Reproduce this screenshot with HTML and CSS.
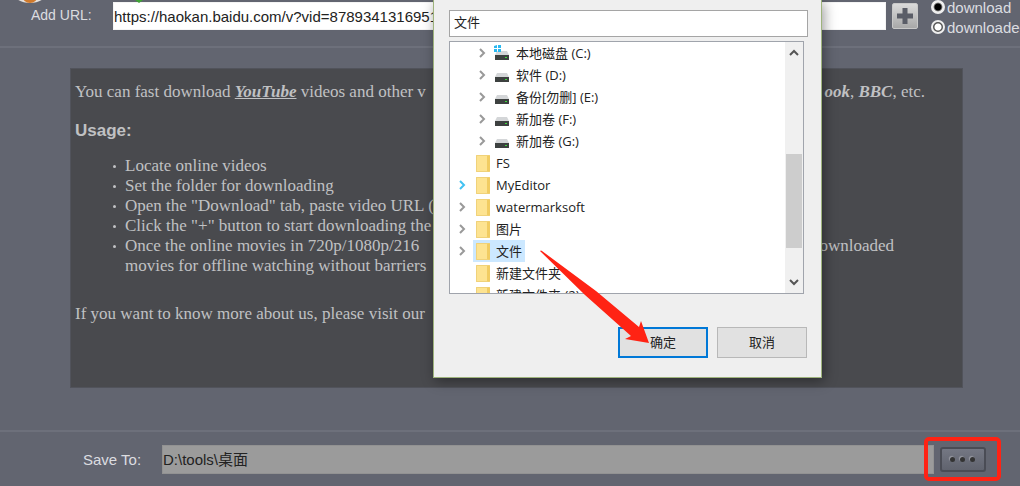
FILE: index.html
```html
<!DOCTYPE html>
<html lang="en">
<head>
<meta charset="utf-8">
<title>Video Downloader</title>
<link rel="stylesheet" href="styles.css">
</head>
<body>
<div class="app">
  <header class="url-bar">
    <svg class="tab-icons" width="160" height="4" viewBox="0 0 160 4" aria-hidden="true">
      <ellipse cx="30" cy="-8" rx="17" ry="11" fill="#e6e2dd"/>
      <ellipse cx="30" cy="-5" rx="8" ry="8" fill="#d07a2c"/>
      <path d="M135 0h8l-4 3z" fill="#3fa535"/>
    </svg>
    <label class="url-label" for="url">Add URL:</label>
    <input class="url-input" id="url" type="text" value="https://haokan.baidu.com/v?vid=8789341316951">
    <button class="add-button" type="button" aria-label="Add">
      <svg width="16" height="16" viewBox="0 0 16 16"><path d="M8 0v16M0 8h16" stroke="#5a5d67" stroke-width="5"/></svg>
    </button>
    <div class="filters">
      <label class="filter"><input class="radio" type="radio" name="filter" checked>download</label>
      <label class="filter"><input class="radio" type="radio" name="filter">downloaded</label>
    </div>
  </header>

  <main class="content">
    <section class="help">
      <p class="split"><span>You can fast download <a class="site" href="#">YouTube</a> videos and other v</span><span class="intro-end"><b>ook</b>, <b>BBC</b>, etc.</span></p>
      <h2 class="usage">Usage:</h2>
      <ul class="steps">
        <li>Locate online videos</li>
        <li>Set the folder for downloading</li>
        <li>Open the "Download" tab, paste video URL (</li>
        <li>Click the "+" button to start downloading the</li>
        <li><span class="split"><span>Once the online movies in 720p/1080p/216</span><span class="step-end">ownloaded</span></span>movies for offline watching without barriers</li>
      </ul>
      <p>If you want to know more about us, please visit our</p>
    </section>
  </main>

  <footer class="save-bar">
    <label class="save-label" for="save">Save To:</label>
    <input class="save-input" id="save" type="text" value="D:\tools\桌面">
    <div class="browse-mark">
      <button class="browse" type="button" aria-label="Browse"><i class="dot"></i><i class="dot"></i><i class="dot"></i></button>
    </div>
  </footer>

  <div class="dialog" role="dialog" aria-label="Folder">
    <input class="folder-input" type="text" value="文件" aria-label="Folder name">
    <div class="tree-box">
      <ul class="tree">
        <li class="row drive-row"><svg class="chevron" viewBox="0 0 8 10"><path d="M2 1l4 4-4 4"/></svg><svg class="drive" viewBox="0 0 16 16"><path d="M3 6h10l2 4H1z" fill="#d4d6d8"/><path d="M1 10h14v5H1z" fill="#3d4140"/><path d="M11 12h2v1h-2z" fill="#3ddc3d"/><path d="M0 1l3-1v3H0zM4 0h3v3H4zM0 4h3v3H0zM4 4h3v3H4z" fill="#29b8f0"/></svg><span class="name">本地磁盘 (C:)</span></li>
        <li class="row drive-row"><svg class="chevron" viewBox="0 0 8 10"><path d="M2 1l4 4-4 4"/></svg><svg class="drive" viewBox="0 0 16 16"><path d="M3 6h10l2 4H1z" fill="#d4d6d8"/><path d="M1 10h14v5H1z" fill="#3d4140"/><path d="M11 12h2v1h-2z" fill="#3ddc3d"/></svg><span class="name">软件 (D:)</span></li>
        <li class="row drive-row"><svg class="chevron" viewBox="0 0 8 10"><path d="M2 1l4 4-4 4"/></svg><svg class="drive" viewBox="0 0 16 16"><path d="M3 6h10l2 4H1z" fill="#d4d6d8"/><path d="M1 10h14v5H1z" fill="#3d4140"/><path d="M11 12h2v1h-2z" fill="#3ddc3d"/></svg><span class="name">备份[勿删] (E:)</span></li>
        <li class="row drive-row"><svg class="chevron" viewBox="0 0 8 10"><path d="M2 1l4 4-4 4"/></svg><svg class="drive" viewBox="0 0 16 16"><path d="M3 6h10l2 4H1z" fill="#d4d6d8"/><path d="M1 10h14v5H1z" fill="#3d4140"/><path d="M11 12h2v1h-2z" fill="#3ddc3d"/></svg><span class="name">新加卷 (F:)</span></li>
        <li class="row drive-row"><svg class="chevron" viewBox="0 0 8 10"><path d="M2 1l4 4-4 4"/></svg><svg class="drive" viewBox="0 0 16 16"><path d="M3 6h10l2 4H1z" fill="#d4d6d8"/><path d="M1 10h14v5H1z" fill="#3d4140"/><path d="M11 12h2v1h-2z" fill="#3ddc3d"/></svg><span class="name">新加卷 (G:)</span></li>
        <li class="row"><span class="chevron"></span><span class="item"><i class="folder"></i>FS</span></li>
        <li class="row"><svg class="chevron open" viewBox="0 0 8 10"><path d="M2 1l4 4-4 4"/></svg><span class="item"><i class="folder"></i>MyEditor</span></li>
        <li class="row"><svg class="chevron" viewBox="0 0 8 10"><path d="M2 1l4 4-4 4"/></svg><span class="item"><i class="folder"></i>watermarksoft</span></li>
        <li class="row"><svg class="chevron" viewBox="0 0 8 10"><path d="M2 1l4 4-4 4"/></svg><span class="item"><i class="folder"></i>图片</span></li>
        <li class="row"><svg class="chevron" viewBox="0 0 8 10"><path d="M2 1l4 4-4 4"/></svg><span class="item selected"><i class="folder"></i>文件</span></li>
        <li class="row"><span class="chevron"></span><span class="item"><i class="folder"></i>新建文件夹</span></li>
        <li class="row"><span class="chevron"></span><span class="item"><i class="folder"></i>新建文件夹 (2)</span></li>
      </ul>
      <div class="scrollbar">
        <svg width="10" height="8" viewBox="0 0 10 8"><path d="M1 6l4-4 4 4" fill="none" stroke="#555" stroke-width="2"/></svg>
        <div class="track"><div class="thumb"></div></div>
        <svg width="10" height="8" viewBox="0 0 10 8"><path d="M1 2l4 4 4-4" fill="none" stroke="#555" stroke-width="2"/></svg>
      </div>
    </div>
    <div class="actions">
      <button class="action primary" type="button">确定</button>
      <button class="action" type="button">取消</button>
    </div>
    <svg class="arrow" width="112" height="96" viewBox="0 0 112 96" aria-hidden="true"><path d="M0 1Q1 0 2 1L56 41L99 77L101 71L109 93L85 89L91 86L45 45Z" fill="#ff2314"/></svg>
  </div>
</div>
</body>
</html>
```
FILE: styles.css
```css
* { box-sizing: border-box; }
body {
  margin: 0;
  background: #626570;
  font-family: "Liberation Sans", "Noto Sans CJK SC", sans-serif;
  font-size: 15px;
  color: #dcdde0;
  overflow: hidden;
}
p, ul, h2 { margin: 0; padding: 0; }
ul { list-style: none; }
button, input { font: inherit; }
.app {
  position: relative;
  min-height: 100vh;
  display: flex;
  flex-direction: column;
}
.url-bar {
  position: relative;
  display: flex;
  align-items: flex-start;
  height: 48px;
  padding-left: 31px;
  border-bottom: 2px solid #6d707b;
}
.tab-icons { position: absolute; left: 0; top: 0; }
.url-label { width: 82px; font-size: 14px; line-height: 30px; }
.url-input {
  flex: 1;
  min-width: 0;
  height: 28px;
  margin-top: 2px;
  padding: 0;
  border: 1px solid #f4f4f4;
  background: #fff;
  color: #222;
}
.add-button {
  width: 26px;
  height: 26px;
  margin: 3px 13px 0 6px;
  padding: 0;
  display: grid;
  place-items: center;
  border: 1px solid #c8c8c8;
  border-radius: 2px;
  background: linear-gradient(#dadada, #a8a8a8);
}
.filters { width: 89px; white-space: nowrap; }
.filter { display: flex; align-items: center; gap: 2px; height: 22px; }
.filter:first-child { height: 16px; align-items: flex-start; line-height: 15px; }
.radio {
  appearance: none;
  width: 14px;
  height: 14px;
  margin: 0;
  flex: none;
  border: 2px solid #eee;
  border-radius: 50%;
  background: radial-gradient(circle, #fff 3px, #555 4px);
}
.radio:checked { background: radial-gradient(circle, #000 3px, #fff 5px); }
.content { flex: 1; display: flex; padding: 20px 57px 42px 70px; }
.help {
  flex: 1;
  min-width: 0;
  padding: 13px 5px 14px 4px;
  border: 1px solid #51535b;
  background: #494a4e;
  font-family: "Liberation Serif", serif;
  font-size: 17px;
  line-height: 20px;
  color: #c0c1c3;
  white-space: nowrap;
}
.split { display: flex; justify-content: space-between; }
.site, .help b { font-weight: bold; font-style: italic; }
.site { color: inherit; }
.intro-end { padding-right: 32px; }
.usage {
  margin: 18px 0 14px;
  font-family: "Liberation Sans", sans-serif;
  font-size: 17px;
  line-height: 22px;
}
.steps { padding-left: 50px; margin-bottom: 28px; }
.steps li { position: relative; }
.steps li::before {
  content: "";
  position: absolute;
  left: -12px;
  top: 9px;
  width: 3px;
  height: 3px;
  border-radius: 50%;
  background: #c0c1c3;
}
.step-end { padding-right: 63px; }
.save-bar {
  display: flex;
  align-items: center;
  height: 56px;
  padding: 0 19px 0 83px;
  border-top: 2px solid #6d707b;
}
.save-label { width: 79px; }
.save-input {
  flex: 1;
  min-width: 0;
  height: 29px;
  padding: 0 0 2px;
  border: 1px solid #929292;
  background: #9b9b9b;
  color: #222;
}
.browse-mark {
  width: 77px;
  height: 44px;
  margin-left: -10px;
  display: grid;
  place-items: center;
  border: 4px solid #ff2314;
  border-radius: 5px;
}
.browse {
  display: flex;
  align-items: center;
  justify-content: center;
  gap: 5px;
  width: 46px;
  height: 25px;
  padding: 0;
  border: 2px solid #4a4c55;
  border-radius: 3px;
  background: linear-gradient(#747783, #60636e);
}
.dot {
  width: 5px;
  height: 5px;
  border-radius: 50%;
  background: #333;
  box-shadow: -1px -1px 1px #9a9ca4;
}
.dialog {
  position: absolute;
  left: 433px;
  top: 0;
  width: 389px;
  padding: 10px 13px 19px 15px;
  border: 1px solid #9eb37c;
  border-top: 0;
  background: #efefef;
  box-shadow: 2px 3px 12px rgba(0, 0, 0, 0.4);
  font-family: "Open Sans", "Noto Sans CJK SC", sans-serif;
  font-size: 13px;
  color: #222;
}
.folder-input {
  display: block;
  width: 100%;
  height: 27px;
  padding: 0 4px 4px;
  border: 1px solid #a5a5a5;
  background: #fff;
  color: #222;
}
.tree-box {
  display: flex;
  height: 253px;
  margin: 4px 4px 33px 0;
  border: 1px solid #a0a4ac;
  background: #fff;
}
.tree { flex: 1; overflow: hidden; }
.row { display: flex; align-items: center; height: 22px; padding-left: 8px; line-height: 18px; white-space: nowrap; }
.drive-row { padding-left: 28px; }
.chevron { width: 8px; height: 10px; flex: none; fill: none; stroke: #999; stroke-width: 2px; }
.open { stroke: #42c2f2; }
.drive { width: 16px; height: 16px; flex: none; margin: 0 6px 0 8px; }
.item { display: flex; align-items: center; gap: 6px; height: 22px; margin-left: 7px; padding: 0 3px; }
.selected { background: #cce8ff; }
.folder {
  width: 14px;
  height: 17px;
  border: 1px solid #f0d27a;
  border-right: 3px solid #f1cc62;
  background: #fde391;
  border-radius: 1px;
}
.scrollbar {
  display: flex;
  flex-direction: column;
  align-items: center;
  width: 18px;
  padding: 7px 1px;
  background: #f0f0f0;
}
.track { flex: 1; width: 16px; padding-top: 97px; }
.thumb { height: 94px; background: #cdcdcd; }
.actions { display: flex; justify-content: flex-end; gap: 9px; padding-right: 1px; }
.action {
  width: 90px;
  height: 31px;
  padding: 0 0 3px;
  border: 1px solid #b8b8b8;
  background: #e1e1e1;
  color: #222;
}
.primary { border: 2px solid #0078d7; }
.arrow { position: absolute; left: 106px; top: 250px; }
```
